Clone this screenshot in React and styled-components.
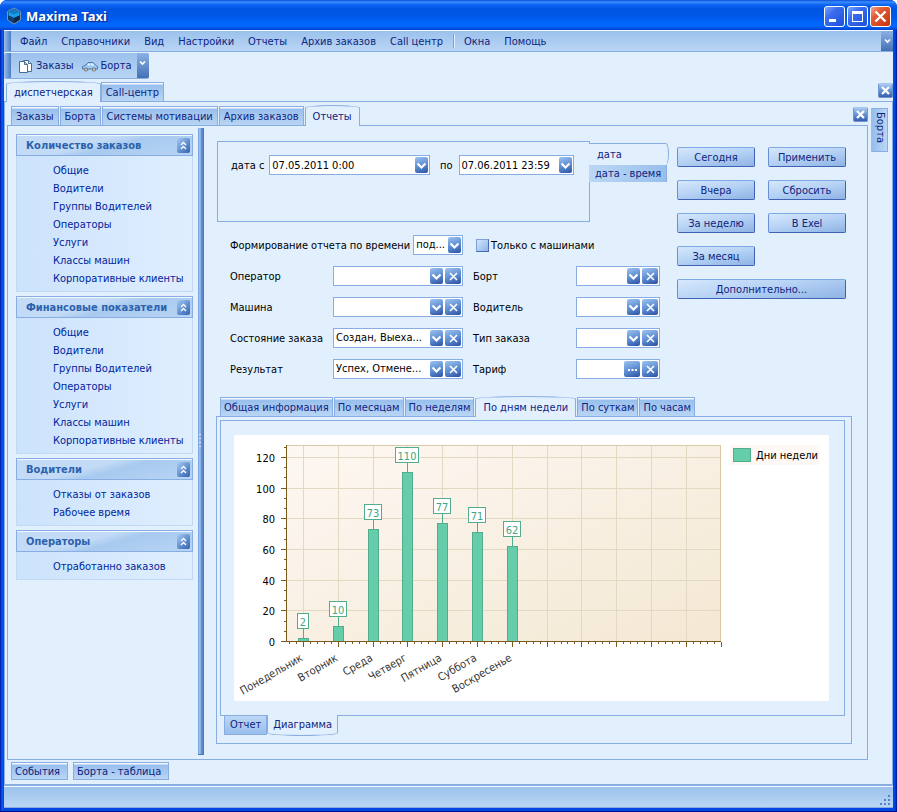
import React, { useState } from "react";
import styled, { createGlobalStyle, css } from "styled-components";

const GlobalStyle = createGlobalStyle`
  * {
    box-sizing: border-box;
  }

  body {
    margin: 0;
    background: #fff;
    font-family: "DejaVu Sans Condensed", Tahoma, "DejaVu Sans", sans-serif;
    font-size: 11px;
    line-height: 14px;
    color: #000;
  }

  button,
  input,
  select {
    font: inherit;
    color: inherit;
    margin: 0;
    padding: 0;
    border: none;
    background: none;
  }

  ul {
    list-style: none;
    margin: 0;
    padding: 0;
  }
`;

const line = "#87ade3";
const face = "#e2f0fe";
const ink = "#10247f";

const Window = styled.div`
  display: flex;
  flex-direction: column;
  min-height: 100vh;
  padding: 0 4px 3px;
  background: linear-gradient(to right, #0014a8, #0a5aee 2px, #0046e0 4px, #0046e0 calc(100% - 4px), #0046e0 calc(100% - 2px), #000e8e);
  border-bottom: 1px solid #000e8e;
  border-radius: 7px 7px 0 0;
  overflow: hidden;
`;

const TitleBar = styled.header`
  display: flex;
  align-items: center;
  gap: 2px;
  height: 30px;
  margin: 0 -4px;
  padding: 2px 6px 0;
  background: linear-gradient(#0a4fd8, #3a8cff 2px, #0a62f0 5px, #0054e3 9px, #0058ea 16px, #0069ff 25px, #0060f4 27px, #0040d0);
`;

const WindowTitle = styled.h1`
  flex: 1;
  margin: 0 0 0 2px;
  font-family: "Noto Sans", "Trebuchet MS", sans-serif;
  font-size: 13px;
  line-height: 18px;
  font-weight: bold;
  color: #fff;
  text-shadow: 1px 1px 1px #0a1f8a;
`;

const CaptionButton = styled.button`
  display: flex;
  width: 21px;
  height: 21px;
  border: 1px solid #fff;
  border-radius: 3px;
  background: ${(p) =>
    p.$danger
      ? "linear-gradient(135deg, #f0a48c, #e25a34 35%, #c8320a)"
      : "linear-gradient(135deg, #7ea6f8, #3a6cf0 35%, #1e50d8)"};

  svg {
    width: 19px;
    height: 19px;
  }
`;

const Client = styled.div`
  display: flex;
  flex-direction: column;
  flex: 1;
  border-top: 1px solid #f4f9ff;
  background: ${face};
  color: ${ink};
`;

const barFill = "linear-gradient(#9bc1ec, #b9d5f4)";

const MenuBar = styled.nav`
  display: flex;
  align-items: center;
  gap: 14px;
  height: 21px;
  border-bottom: 1px solid ${line};
  background: ${barFill};
`;

const Grip = styled.span`
  align-self: stretch;
  width: 7px;
  background: linear-gradient(to right, #9dbfe8, #4a7cc4);

  ${MenuBar} & {
    margin-right: -5px;
  }
`;

const MenuItem = styled.button`
  height: 18px;
  padding-top: 1px;
  white-space: nowrap;
`;

const MenuSeparator = styled.span`
  width: 2px;
  height: 14px;
  margin: 0 -5px 0 -4px;
  border-left: 1px solid #7aa2da;
  background: #e2f0fe;
`;

const MoreButton = styled.button`
  display: flex;
  justify-content: center;
  align-self: stretch;
  width: 12px;
  margin-left: auto;
  padding-top: 7px;
  background: linear-gradient(#8cb2e4, #4470b6);

  svg {
    width: 7px;
    height: 6px;
  }
`;

const ToolBar = styled.div`
  display: flex;
  align-items: center;
  align-self: flex-start;
  height: 26px;
  margin-top: 1px;
  border-radius: 2px;
  background: ${barFill};
  border-bottom: 1px solid ${line};
  overflow: hidden;

  ${MoreButton} {
    margin-left: 4px;
  }
`;

const ToolButton = styled.button`
  display: flex;
  align-items: center;
  gap: 3px;
  padding: 1px 1px 0 7px;
`;

const tabActive = {
  top: css`
    height: 21px;
    padding: 1px 7px 0;
    border: 1px solid ${line};
    border-bottom: none;
    border-radius: 50% 50% 0 0 / 3px;
    background: ${face};
    margin-bottom: -1px;
  `,
  bottom: css`
    height: 21px;
    border: 1px solid ${line};
    border-top: none;
    border-radius: 0 0 50% 50% / 3px;
    background: ${face};
    margin-top: -1px;
  `,
};

const TabStrip = styled.div`
  display: flex;
  position: relative;
  align-items: ${(p) => (p.$side === "bottom" ? "flex-start" : "flex-end")};
  gap: ${(p) => p.$gap || 0}px;
  height: ${(p) => p.$height || 20}px;
  padding-left: ${(p) => p.$indent || 0}px;
`;

const Tab = styled.button`
  height: 19px;
  padding: ${(p) => (p.$side === "bottom" ? "0 5px" : p.$narrow ? "2px 3px 0" : "2px 4px 0")};
  border: 1px solid ${line};
  background: ${(p) =>
    p.$side === "bottom"
      ? "linear-gradient(#bcd7f5, #98bfec)"
      : "linear-gradient(#f4f9ff 1px, #98bfec 2px, #b9d5f4)"};
  line-height: 16px;
  white-space: nowrap;
  color: ${ink};
  border-${(p) => (p.$side === "bottom" ? "top" : "bottom")}: none;
  ${(p) => p.$active && tabActive[p.$side || "top"]}
`;

const CloseButton = styled.button`
  display: flex;
  align-items: center;
  justify-content: center;
  align-self: center;
  width: 15px;
  height: 15px;
  margin-left: auto;
  border-radius: 2px;
  background: linear-gradient(#a9cbf2, #4f7cc2 70%, #3c5fae);
  border: 1px solid #6c95d2;
  border-top-color: #a6c8f0;

  svg {
    width: 9px;
    height: 9px;
  }
`;

const Page = styled.div`
  display: flex;
  flex-direction: column;
  flex: 1;
  padding: 2px 4px 4px 2px;
  border: 1px solid ${line};
`;

const Workspace = styled.div`
  display: flex;
  flex: 1;
  gap: 3px;
`;

const ReportsDock = styled.div`
  display: flex;
  flex-direction: column;
  flex: 1;
  min-width: 0;
`;

const ReportsPage = styled.div`
  display: flex;
  flex: 1;
  padding: 2px 15px 4px 8px;
  border: 1px solid ${line};
`;

const SideDock = styled.aside`
  padding-top: 4px;
`;

const SideTab = styled.button`
  width: 17px;
  height: 44px;
  padding: 3px 0;
  border: 1px solid ${line};
  border-left: 2px solid #98bfec;
  background: linear-gradient(to right, #98bfec, #bcd7f5);
  writing-mode: vertical-rl;
  line-height: 13px;
  text-align: left;
`;

const Sidebar = styled.aside`
  display: flex;
  flex-direction: column;
  gap: 4px;
  width: 177px;
  flex: none;
  padding-top: 6px;
`;

const GroupHeader = styled.h2`
  display: flex;
  align-items: center;
  justify-content: space-between;
  height: 22px;
  margin: 0;
  padding: 1px 2px 0 9px;
  border: 1px solid ${line};
  box-shadow: inset 0 1px #f0f7ff;
  background: linear-gradient(165deg, #c3dbf6 42%, #a8caef 56%, #b8d4f4);
  font-size: 11px;
  font-weight: bold;
  color: #2c62ad;
  white-space: nowrap;
`;

const CollapseButton = styled.button`
  display: flex;
  align-items: center;
  justify-content: center;
  width: 13px;
  height: 15px;
  border-radius: 2px;
  background: linear-gradient(135deg, #a9cbf2, #5c8acc 60%, #3c5fae);

  svg {
    width: 7px;
    height: 9px;
  }
`;

const GroupBody = styled.ul`
  padding: 5px 0 4px 36px;
  border: 1px solid #bfd9f7;
  border-top: none;
  background: linear-gradient(to right, #cce3fc, #dfeefe);
`;

const GroupLink = styled.a`
  display: block;
  padding-top: 2px;
  line-height: 16px;
  color: #001f9c;
  text-decoration: none;
  white-space: nowrap;
`;

const Splitter = styled.div`
  display: flex;
  align-items: center;
  justify-content: center;
  flex: none;
  width: 6px;
  margin: 0 12px 0 5px;
  background: linear-gradient(to right, #6f9bdb, #a8cbf3 2px, #6a97d6 3px, #4a76b8);
  border-bottom: 1px solid #4a76b8;

  svg {
    width: 4px;
    height: 14px;
  }
`;

const Content = styled.main`
  display: flex;
  flex-direction: column;
  flex: 1;
  min-width: 0;
  padding: 13px 0 11px;
  color: #000;
`;

const FilterArea = styled.div`
  display: flex;
  padding-right: 6px;
`;

const Filters = styled.form`
  flex: 1;
`;

const Period = styled.div`
  display: flex;
  padding: 0 9px 0 1px;
`;

const PeriodBox = styled.div`
  display: flex;
  align-items: flex-start;
  flex: 1;
  height: 81px;
  padding: 13px 15px 0 13px;
  border: 1px solid ${line};
`;

const Label = styled.label`
  align-self: center;
  padding-top: 1px;
  white-space: nowrap;
`;

const PeriodField = styled.div`
  display: flex;
  flex: ${(p) => p.$grow} 1 0;
  gap: ${(p) => p.$gap}px;

  & + & {
    margin-left: 10px;
  }
`;

const PeriodTabs = styled.div`
  width: 79px;
  margin-left: -1px;
  padding-top: 2px;
`;

const PeriodTab = styled.button`
  display: block;
  text-align: left;
  width: ${(p) => (p.$active ? 80 : 78)}px;
  height: ${(p) => (p.$active ? 22 : 17)}px;
  padding-left: ${(p) => (p.$active ? 8 : 6)}px;
  color: ${ink};
  white-space: nowrap;
  border-right: 1px solid ${line};
  background: linear-gradient(to right, #bcd7f5, #98bfec);
  ${(p) =>
    p.$active &&
    css`
      border-top: 1px solid ${line};
      border-radius: 0 3px 3px 0 / 0 50% 50% 0;
      background: ${face};
    `}
`;

const Field = styled.div`
  display: flex;
  align-items: center;
  gap: 3px;
  height: 20px;
  flex: 1;
  min-width: 0;
  padding: 0 1px 0 2px;
  border: 1px solid ${line};
  background: #fff;
`;

const TextInput = styled.input`
  flex: 1;
  width: 0;
  min-width: 0;
  height: 18px;
`;

const Select = styled.select`
  appearance: none;
  flex: 1;
  width: 0;
  min-width: 0;
  height: 18px;
  outline: none;
`;

const FieldButton = styled.button`
  display: flex;
  align-items: center;
  justify-content: center;
  flex: none;
  width: ${(p) => (p.$wide ? 16 : 13)}px;
  height: 16px;
  border-radius: 2px;
  background: linear-gradient(160deg, #9cc3f0, #5b8bd0 55%, #2c4fa2);

  svg {
    width: 9px;
    height: 9px;
  }

  & + & {
    margin-left: -1px;
  }
`;

const FieldGrid = styled.div`
  display: grid;
  grid-template-columns: 103px 1fr 113px 84px;
  gap: 11px 0;
  padding: 13px 17px 0 14px;
`;

const TimeMode = styled.div`
  display: flex;
  grid-column: span 2;
  gap: 3px;

  ${Field} {
    gap: 0;
  }
`;

const CheckRow = styled.div`
  display: flex;
  align-items: center;
  gap: 2px;
  grid-column: span 2;
  padding-left: 13px;
`;

const CheckBox = styled.input`
  appearance: none;
  width: 13px;
  height: 13px;
  border: 1px solid #7f9fd8;
  border-right-color: #4a68b8;
  border-bottom-color: #4a68b8;
  background: linear-gradient(135deg, #cfe6fd, #8fb4e4);

  &:checked {
    background: #3a62b4;
  }
`;

const ShiftedLabel = styled(Label)`
  padding-left: 10px;
`;

const Actions = styled.div`
  display: grid;
  grid-template-columns: 78px 78px;
  grid-auto-rows: 20px;
  gap: 13px;
  padding-top: 6px;
`;

const ActionButton = styled.button`
  padding-top: 1px;
  border: 1px solid #6a8fd8;
  border-top-color: #7ea8e4;
  border-right-color: #3f62b4;
  border-bottom-color: #3f62b4;
  border-radius: 2px;
  background: linear-gradient(170deg, #d6e8fc, #b4d1f4 50%, #8fb3e4);
  color: ${ink};
  ${(p) => p.$col && `grid-column: ${p.$col};`}
`;

const ResultPage = styled.section`
  display: flex;
  flex-direction: column;
  flex: 1;
  padding: 3px 6px 7px 3px;
  border: 1px solid ${line};
`;

const ResultTabs = styled.div`
  padding-top: 17px;
`;

const ChartFrame = styled.div`
  flex: 1;
  padding: 14px 15px 14px 13px;
  border: 1px solid ${line};
`;

const ChartSheet = styled.div`
  height: 100%;
  background: #fff;
`;

const ChartSvg = styled.svg`
  display: block;
  width: 100%;
  height: 265px;
  font-size: 11px;
`;

const BottomDock = styled.div`
  display: flex;
  gap: 5px;
  padding: 2px 4px 0;
`;

const DockButton = styled.button`
  height: 18px;
  padding: 1px 7px 0 3px;
  border: 1px solid ${line};
  background: linear-gradient(#f4f9ff 1px, #98bfec 2px, #b9d5f4);
`;

const StatusBar = styled.footer`
  display: flex;
  align-items: flex-end;
  justify-content: flex-end;
  height: 23px;
  padding: 0 2px 1px;
  border-top: 1px solid ${line};
  border-bottom: 1px solid ${line};
  box-shadow: inset 0 1px #f4f9ff;
  background: ${barFill};
`;

const CloseIcon = () => (
  <svg viewBox="0 0 9 9" fill="none" stroke="#fff" strokeWidth="2.2">
    <path d="M1 1l7 7M8 1l-7 7" />
  </svg>
);

const ThinCloseIcon = () => (
  <svg viewBox="0 0 9 9" fill="none" stroke="#fff" strokeWidth="1.6">
    <path d="M1 1l7 7M8 1l-7 7" />
  </svg>
);

const ArrowIcon = () => (
  <svg viewBox="0 0 9 9" fill="none" stroke="#fff" strokeWidth="2.2">
    <path d="M0.5 2.5l4 4 4-4" />
  </svg>
);

const DotsIcon = () => (
  <svg viewBox="0 0 9 9" fill="#fff">
    <path d="M0 4h2v2H0zM3.500 4h2v2h-2zM7 4h2v2H7z" />
  </svg>
);

const MoreIcon = () => (
  <svg viewBox="0 0 7 6" fill="none" stroke="#fff" strokeWidth="1.6">
    <path d="M1 1.5l2.5 2.5L6 1.5" />
  </svg>
);

const CollapseIcon = () => (
  <svg viewBox="0 0 7 9" fill="none" stroke="#fff" strokeWidth="1.3">
    <path d="M1 4l2.5-2.5L6 4M1 8l2.5-2.5L6 8" />
  </svg>
);

const AppIcon = () => (
  <svg width="16" height="18" viewBox="0 0 16 18">
    <path d="M8 1l6.500 3.500v8.500L8 17l-6.500-4V4.500z" fill="#10395f" stroke="#7c93b4" />
    <path d="M8 2l5.500 3v3.500L8 11 2.500 8.500V5z" fill="#1aa0e8" />
    <path d="M8 2l5.500 3L8 7.500 2.500 5z" fill="#0f7cc8" />
    <path d="M2.500 8.500L8 11v5l-5.500-3.500z" fill="#0b4272" />
    <path d="M13.500 8.500L8 11v5l5.500-3.500z" fill="#0a2748" />
  </svg>
);

const OrdersIcon = () => (
  <svg width="15" height="15" viewBox="0 0 15 15" stroke="#4a6a98" strokeWidth="1">
    <path d="M5.500 1.500h5l3 3v8h-8z" fill="#fff" />
    <path d="M10.500 1.500v3h3" fill="#cfe0f6" />
    <path d="M1.500 2.500h5l3 3v8h-8z" fill="#fff" />
    <path d="M6.500 2.500v3h3" fill="#b8d0ee" />
  </svg>
);

const CarIcon = () => (
  <svg width="16" height="11" viewBox="0 0 16 11">
    <path d="M0.500 8V5.500L4 4l2-2.500h5L13.500 4l2 1.500V8z" fill="#9cc8f2" stroke="#4f78b0" />
    <path d="M5 4.500l1.700-2H8v2zM9 2.500h1.700l1.600 2H9z" fill="#e6f4ff" />
    <circle cx="4" cy="8.500" r="2" fill="#777" />
    <circle cx="12" cy="8.500" r="2" fill="#777" />
    <circle cx="4" cy="8.500" r="1" fill="#e6d8c0" />
    <circle cx="12" cy="8.500" r="1" fill="#e6d8c0" />
  </svg>
);

const menuItems = ["Файл", "Справочники", "Вид", "Настройки", "Отчеты", "Архив заказов", "Call центр"];

const reportItems = [
  "Общие",
  "Водители",
  "Группы Водителей",
  "Операторы",
  "Услуги",
  "Классы машин",
  "Корпоративные клиенты",
];

const groups = [
  { title: "Количество заказов", items: reportItems },
  { title: "Финансовые показатели", items: reportItems },
  { title: "Водители", items: ["Отказы от заказов", "Рабочее время"] },
  { title: "Операторы", items: ["Отработанно заказов"] },
];

const filterFields = [
  { id: "operator", label: "Оператор", value: "" },
  { id: "bort", label: "Борт", value: "", right: true },
  { id: "car", label: "Машина", value: "" },
  { id: "driver", label: "Водитель", value: "", right: true },
  { id: "state", label: "Состояние заказа", value: "Создан, Выеха..." },
  { id: "type", label: "Тип заказа", value: "", right: true },
  { id: "result", label: "Результат", value: "Успех, Отмене..." },
  { id: "tariff", label: "Тариф", value: "", right: true, dots: true },
];

const actions = [
  { text: "Сегодня" },
  { text: "Применить" },
  { text: "Вчера" },
  { text: "Сбросить" },
  { text: "За неделю" },
  { text: "В Exel" },
  { text: "За месяц", col: "1" },
  { text: "Дополнительно...", col: "1 / span 2" },
];

const resultTabs = ["Общая информация", "По месяцам", "По неделям", "По дням недели", "По суткам", "По часам"];

const weekData = [
  { day: "Понедельник", value: 2 },
  { day: "Вторник", value: 10 },
  { day: "Среда", value: 73 },
  { day: "Четверг", value: 110 },
  { day: "Пятница", value: 77 },
  { day: "Суббота", value: 71 },
  { day: "Воскресенье", value: 62 },
];

const plot = { left: 52, right: 486, top: 10, bottom: 206 };
const xAt = (i) => Math.round(69 + i * 34.8) + 0.5;
const yAt = (v) => Math.round(plot.bottom - v * 1.535) + 0.5;

const WeekChart = () => (
  <ChartSvg viewBox="0 0 595 265" preserveAspectRatio="xMinYMin meet">
    <defs>
      <linearGradient id="plotFill" x1="0" y1="0" x2="1" y2="1">
        <stop offset="0" stopColor="#fdf8f3" />
        <stop offset="0.3" stopColor="#fbf3ea" />
        <stop offset="1" stopColor="#f3e8d2" />
      </linearGradient>
    </defs>
    <rect x="52.5" y="10.5" width="434" height="196" fill="url(#plotFill)" stroke="#d8c8a8" />
    <g stroke="#e3d9c2">
      {[20, 40, 60, 80, 100, 120].map((v) => (
        <line key={v} x1="53" x2="486" y1={yAt(v)} y2={yAt(v)} />
      ))}
      {Array.from({ length: 12 }, (_, i) => (
        <line key={i} x1={xAt(i)} x2={xAt(i)} y1="11" y2="206" />
      ))}
    </g>
    <g stroke="#7a5a1e">
      <line x1="52.5" x2="52.5" y1="10" y2="207" />
      {[0, 20, 40, 60, 80, 100, 120].map((v) => (
        <line key={v} x1="47" x2="52" y1={yAt(v)} y2={yAt(v)} />
      ))}
      {Array.from({ length: 20 }, (_, i) => (
        <line key={i} x1="50" x2="52" y1={yAt((i * 20) / 3)} y2={yAt((i * 20) / 3)} />
      ))}
      {Array.from({ length: 13 }, (_, i) => (
        <line key={i} x1={xAt(i)} x2={xAt(i)} y1="207" y2="212" />
      ))}
      {Array.from({ length: 63 }, (_, i) => (
        <line key={i} x1={xAt((i - 2) / 5)} x2={xAt((i - 2) / 5)} y1="207" y2="209" />
      ))}
    </g>
    <g textAnchor="end" fill="#000">
      {[0, 20, 40, 60, 80, 100, 120].map((v) => (
        <text key={v} x="41" y={yAt(v) + 4}>
          {v}
        </text>
      ))}
    </g>
    {weekData.map(({ day, value }, i) => {
      const x = xAt(i);
      const y = yAt(value);
      const w = String(value).length * 6 + 5;
      return (
        <g key={day}>
          <rect x={x - 5} y={y} width="10" height={206.5 - y} fill="#66cdaa" stroke="#52ad8e" />
          <line x1={x} x2={x} y1={y - 10} y2={y} stroke="#52ad8e" />
          <rect x={x - Math.ceil(w / 2)} y={y - 25} width={w} height="15" fill="#fff" stroke="#52ad8e" />
          <text x={x - 0.5} y={y - 13} textAnchor="middle" fill="#45a583">
            {value}
          </text>
          <text transform={`translate(${x} 225) rotate(-30)`} textAnchor="end" fill="#333">
            {day}
          </text>
        </g>
      );
    })}
    <line x1="47" x2="487" y1="206.5" y2="206.5" stroke="#7a5a1e" />
    <rect x="496" y="10" width="89" height="20" fill="#fdf8f3" />
    <rect x="499.5" y="13.5" width="17" height="13" fill="#66cdaa" stroke="#52ad8e" />
    <text x="522" y="24">
      Дни недели
    </text>
  </ChartSvg>
);

const FilterField = ({ id, label, value, right, dots }) => {
  const Caption = right ? ShiftedLabel : Label;
  return (
    <>
      <Caption htmlFor={id}>{label}</Caption>
      <Field>
        {dots ? (
          <TextInput id={id} defaultValue={value} />
        ) : (
          <Select id={id} defaultValue={value}>
            <option value={value}>{value}</option>
          </Select>
        )}
        <FieldButton type="button" $wide={dots} aria-label="Выбрать">
          {dots ? <DotsIcon /> : <ArrowIcon />}
        </FieldButton>
        <FieldButton type="button" $wide aria-label="Очистить">
          <ThinCloseIcon />
        </FieldButton>
      </Field>
    </>
  );
};

const App = () => {
  const [dateFrom, setDateFrom] = useState("07.05.2011 0:00");
  const [dateTo, setDateTo] = useState("07.06.2011 23:59");
  const [onlyCars, setOnlyCars] = useState(false);
  const [resultTab, setResultTab] = useState("По дням недели");

  return (
    <Window>
      <GlobalStyle />
      <TitleBar>
        <AppIcon />
        <WindowTitle>Maxima Taxi</WindowTitle>
        <CaptionButton aria-label="Свернуть">
          <svg viewBox="0 0 19 19">
            <path d="M4 12h7v3H4z" fill="#fff" />
          </svg>
        </CaptionButton>
        <CaptionButton aria-label="Развернуть">
          <svg viewBox="0 0 19 19">
            <path d="M4 4h11v11H4zM5 7v7h9V7z" fill="#fff" fillRule="evenodd" />
          </svg>
        </CaptionButton>
        <CaptionButton $danger aria-label="Закрыть">
          <svg viewBox="0 0 19 19" stroke="#fff" strokeWidth="2.4">
            <path d="M4.500 4.500l10 10M14.500 4.500l-10 10" />
          </svg>
        </CaptionButton>
      </TitleBar>

      <Client>
        <MenuBar>
          <Grip />
          {menuItems.map((item) => (
            <MenuItem key={item}>{item}</MenuItem>
          ))}
          <MenuSeparator />
          <MenuItem>Окна</MenuItem>
          <MenuItem>Помощь</MenuItem>
          <MoreButton aria-label="Ещё">
            <MoreIcon />
          </MoreButton>
        </MenuBar>

        <ToolBar>
          <Grip />
          <ToolButton>
            <OrdersIcon />
            Заказы
          </ToolButton>
          <ToolButton>
            <CarIcon />
            Борта
          </ToolButton>
          <MoreButton aria-label="Ещё">
            <MoreIcon />
          </MoreButton>
        </ToolBar>

        <TabStrip $height={22} $indent={2}>
          <Tab $active>диспетчерская</Tab>
          <Tab>Call-центр</Tab>
          <CloseButton aria-label="Закрыть">
            <CloseIcon />
          </CloseButton>
        </TabStrip>

        <Page>
          <Workspace>
            <ReportsDock>
              <TabStrip $height={21} $indent={4} $gap={1}>
                <Tab>Заказы</Tab>
                <Tab>Борта</Tab>
                <Tab>Системы мотивации</Tab>
                <Tab>Архив заказов</Tab>
                <Tab $active>Отчеты</Tab>
                <CloseButton aria-label="Закрыть">
                  <CloseIcon />
                </CloseButton>
              </TabStrip>

              <ReportsPage>
                <Sidebar>
                  {groups.map((group) => (
                    <section key={group.title}>
                      <GroupHeader>
                        {group.title}
                        <CollapseButton aria-label="Свернуть группу">
                          <CollapseIcon />
                        </CollapseButton>
                      </GroupHeader>
                      <GroupBody>
                        {group.items.map((item) => (
                          <li key={item}>
                            <GroupLink href="#">{item}</GroupLink>
                          </li>
                        ))}
                      </GroupBody>
                    </section>
                  ))}
                </Sidebar>

                <Splitter>
                  <svg viewBox="0 0 4 14" fill="#d4e6fb">
                    <path d="M0 0h2v1H0zM0 4h2v1H0zM0 8h2v1H0zM0 12h2v1H0z" />
                  </svg>
                </Splitter>

                <Content>
                  <FilterArea>
                    <Filters onSubmit={(e) => e.preventDefault()}>
                      <Period>
                        <PeriodBox>
                          <PeriodField $grow={199} $gap={5}>
                            <Label htmlFor="dateFrom">дата с</Label>
                            <Field>
                              <TextInput
                                id="dateFrom"
                                value={dateFrom}
                                onChange={(e) => setDateFrom(e.target.value)}
                              />
                              <FieldButton type="button" aria-label="Календарь">
                                <ArrowIcon />
                              </FieldButton>
                            </Field>
                          </PeriodField>
                          <PeriodField $grow={134} $gap={6}>
                            <Label htmlFor="dateTo">по</Label>
                            <Field>
                              <TextInput
                                id="dateTo"
                                value={dateTo}
                                onChange={(e) => setDateTo(e.target.value)}
                              />
                              <FieldButton type="button" aria-label="Календарь">
                                <ArrowIcon />
                              </FieldButton>
                            </Field>
                          </PeriodField>
                        </PeriodBox>
                        <PeriodTabs>
                          <PeriodTab type="button" $active>
                            дата
                          </PeriodTab>
                          <PeriodTab type="button">дата - время</PeriodTab>
                        </PeriodTabs>
                      </Period>

                      <FieldGrid>
                        <TimeMode>
                          <Label htmlFor="timeMode">Формирование отчета по времени</Label>
                          <Field>
                            <Select id="timeMode">
                              <option>под...</option>
                            </Select>
                            <FieldButton type="button" aria-label="Выбрать">
                              <ArrowIcon />
                            </FieldButton>
                          </Field>
                        </TimeMode>
                        <CheckRow>
                          <CheckBox
                            type="checkbox"
                            id="onlyCars"
                            checked={onlyCars}
                            onChange={(e) => setOnlyCars(e.target.checked)}
                          />
                          <Label htmlFor="onlyCars">Только с машинами</Label>
                        </CheckRow>
                        {filterFields.map((field) => (
                          <FilterField key={field.id} {...field} />
                        ))}
                      </FieldGrid>
                    </Filters>

                    <Actions>
                      {actions.map(({ text, col }) => (
                        <ActionButton key={text} $col={col}>
                          {text}
                        </ActionButton>
                      ))}
                    </Actions>
                  </FilterArea>

                  <ResultTabs>
                    <TabStrip $indent={4} $gap={1}>
                      {resultTabs.map((tab) => (
                        <Tab key={tab} $narrow $active={tab === resultTab} onClick={() => setResultTab(tab)}>
                          {tab}
                        </Tab>
                      ))}
                    </TabStrip>
                  </ResultTabs>
                  <ResultPage>
                    <ChartFrame>
                      <ChartSheet>
                        <WeekChart />
                      </ChartSheet>
                    </ChartFrame>
                    <TabStrip $side="bottom" $indent={4}>
                      <Tab $side="bottom">Отчет</Tab>
                      <Tab $side="bottom" $active>
                        Диаграмма
                      </Tab>
                    </TabStrip>
                  </ResultPage>
                </Content>
              </ReportsPage>
            </ReportsDock>

            <SideDock>
              <SideTab>Борта</SideTab>
            </SideDock>
          </Workspace>

          <BottomDock>
            <DockButton>События</DockButton>
            <DockButton>Борта - таблица</DockButton>
          </BottomDock>
        </Page>

        <StatusBar>
          <svg width="11" height="11" viewBox="0 0 11 11" fill="#5580cc">
            <path d="M8 0h2v2H8zM4 4h2v2H4zM8 4h2v2H8zM0 8h2v2H0zM4 8h2v2H4zM8 8h2v2H8z" />
          </svg>
        </StatusBar>
      </Client>
    </Window>
  );
};

export default App;
